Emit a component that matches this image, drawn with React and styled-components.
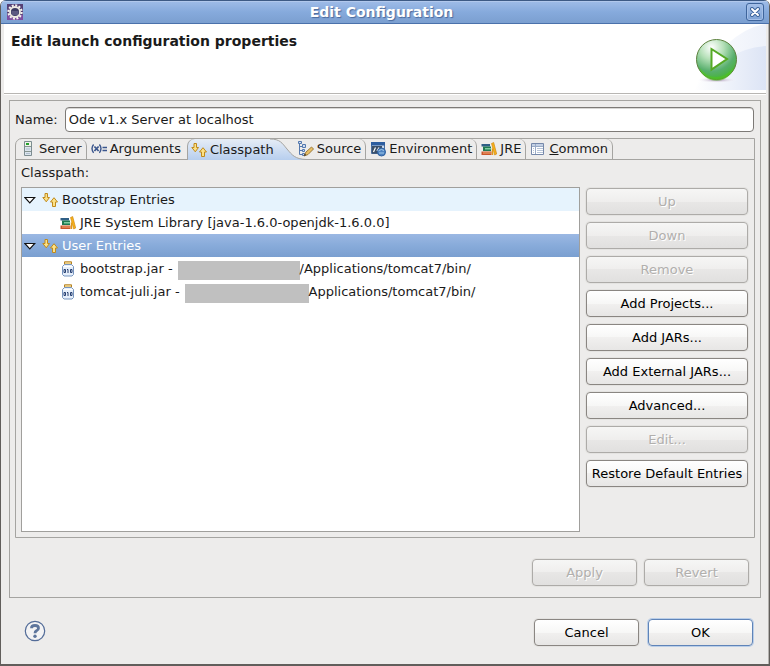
import React from "react";
import styled, { createGlobalStyle, css } from "styled-components";

const GlobalStyle = createGlobalStyle`
  * { box-sizing: border-box; }
  body { margin: 0; background: #fff; }
  body, button, input {
    font-family: "DejaVu Sans", sans-serif;
    font-size: 13px;
    line-height: 16px;
    color: #1a1a1a;
  }
`;

const Window = styled.main`
  display: flex;
  flex-direction: column;
  min-height: 100vh;
  background: #edeceb;
  border: 1px solid #615e5b;
  border-top: 0;
  border-bottom-width: 2px;
  border-radius: 6px 6px 0 0;
  box-shadow: inset -1px 0 #b5b2af;
  padding-right: 1px;
  overflow: hidden;
`;

const TitleBar = styled.header`
  display: flex;
  align-items: center;
  height: 24px;
  margin-right: -1px;
  padding: 0 5px 0 6px;
  background: linear-gradient(#9fbce8, #86aadc 50%, #7b9fd0);
  border-top: 1px solid #3d5a85;
  border-bottom: 1px solid #4a71ab;
  box-shadow: inset 0 1px #b1c8ec;
`;

const WindowTitle = styled.h1`
  flex: 1;
  margin: 0;
  padding-right: 6px;
  font-size: 14px;
  line-height: 16px;
  text-align: center;
  color: #fff;
  text-shadow: 1px 1px 1px #4a6a9c;
`;

const CloseButton = styled.button`
  display: grid;
  place-items: center;
  width: 18px;
  height: 18px;
  padding: 0;
  background: linear-gradient(#a3bfe9, #7fa3d5);
  border: 1px solid #3f659c;
  border-radius: 3px;
  box-shadow: inset 0 0 0 1px #a5c0e8;
`;

const Banner = styled.section`
  display: flex;
  justify-content: space-between;
  align-items: flex-start;
  height: 71px;
  margin: 0 2px 0 3px;
  background: #fff;
  border-bottom: 1px solid #fff;
  box-shadow: inset 0 -1px #b8b6b3;
`;

const BannerTitle = styled.h2`
  margin: 0;
  padding: 9px 7px;
  font-size: 14px;
  line-height: 16px;
`;

const Content = styled.section`
  display: flex;
  flex: 1;
  flex-direction: column;
  margin: 5px 7px 0 8px;
  padding: 6px 5px 11px;
  border: 1px solid #a5a4a1;
`;

const NameRow = styled.div`
  display: flex;
  align-items: center;
  gap: 7px;
  padding-right: 1px;
`;

const NameInput = styled.input`
  flex: 1;
  min-width: 0;
  height: 25px;
  padding: 0 3px;
  background: #fff;
  border: 1px solid #7d7a77;
  border-radius: 4px;
  box-shadow: inset 0 1px #d8d7d5;
  outline: none;
`;

const TabFolder = styled.div`
  display: flex;
  flex: 1;
  flex-direction: column;
  margin-top: 6px;
  border: 1px solid #a5a4a1;
  border-radius: 7px 0 0 0;
`;

const TabList = styled.div`
  display: flex;
  height: 21px;
  border-bottom: 1px solid #a5a4a1;
`;

const TabButton = styled.button`
  position: relative;
  display: flex;
  align-items: center;
  gap: 3px;
  height: 20px;
  padding: 0 4px;
  background: none;
  border: 0;
  border-right: 1px solid #a5a4a1;
  border-radius: 0 7px 0 0;
  white-space: nowrap;
  ${(p) => p.$beforeActive && css`
    border-right: 0;
    padding-right: 6px;
  `}
  ${(p) => p.$active && css`
    z-index: 1;
    height: 21px;
    padding-right: 20px;
    border-right: 0;
    border-radius: 7px 0 0 0;
    background: linear-gradient(#e6edf6, #b7ceee) no-repeat 0 0 / calc(100% - 24px) 100%;
    box-shadow: inset 1px 0 #a5a4a1;
  `}
`;

const TabCurve = styled.svg`
  position: absolute;
  right: -12px;
  top: 0;
`;

const TabLabel = styled.span`
  position: relative;
`;

const TabPanel = styled.div`
  display: flex;
  flex: 1;
  flex-direction: column;
  padding: 5px;
`;

const PanelLabel = styled.div`
  height: 22px;
`;

const Columns = styled.div`
  display: flex;
  flex: 1;
  gap: 6px;
`;

const Tree = styled.ul`
  flex: 1;
  min-width: 0;
  margin: 0;
  padding: 0;
  list-style: none;
  background: #fff;
  border: 1px solid #a09f9c;
`;

const TreeRow = styled.li`
  display: flex;
  align-items: center;
  gap: 4px;
  height: 23px;
  padding-left: ${(p) => (p.$level === 2 ? 38 : 2)}px;
  white-space: nowrap;
  ${(p) => p.$tint && css`background: #e6f3fd;`}
  ${(p) => p.$selected && css`
    background: linear-gradient(#9bb8e3, #88abda 50%, #7a9fd0);
    color: #fff;
  `}
`;

const Twisty = styled.svg`
  margin-right: 2px;
`;

const Redacted = styled.span`
  display: inline-block;
  width: ${(p) => p.$width}px;
  height: 19px;
  margin-top: 4px;
  background: #c0c0c0;
`;

const Path = styled.span`
  display: flex;
  align-items: center;
  padding-left: 1px;
`;

const Actions = styled.div`
  display: flex;
  flex-direction: column;
  gap: 7px;
  padding: 1px 1px 0 0;
`;

const PushButton = styled.button`
  min-width: ${(p) => (p.$wide ? 162 : 105)}px;
  height: 27px;
  padding: 0 4px;
  background: linear-gradient(#ffffff, #f7f7f6 50%, #f1f0ef 50%, #e7e6e5);
  border: 1px solid #8a8682;
  border-radius: 4px;
  box-shadow: 0 0 0 1px #e4e3e1;
  color: #000;
  white-space: nowrap;
  &:disabled {
    background: linear-gradient(#f6f6f5, #efeeed 50%, #e8e7e6 50%, #e1e0df);
    border-color: #adaba8;
    color: #b1afad;
    text-shadow: 1px 1px #fff;
  }
  ${(p) => p.$primary && css`
    border-color: #5f84b8;
    box-shadow: 0 0 0 1px #bacee8;
  `}
`;

const ButtonRow = styled.div`
  display: flex;
  justify-content: flex-end;
  gap: 7px;
  margin-top: 21px;
  padding-right: 6px;
`;

const Footer = styled.footer`
  display: flex;
  align-items: flex-start;
  gap: 9px;
  padding: 21px 15px 18px 23px;
`;

const HelpButton = styled.button`
  display: flex;
  margin-right: auto;
  padding: 1px 0 0;
  background: none;
  border: 0;
`;

function Icon({ children }) {
  return (
    <svg width="16" height="16" viewBox="0 0 16 16" aria-hidden="true">
      {children}
    </svg>
  );
}

function AppIcon() {
  return (
    <Icon>
      <rect width="16" height="16" fill="#554075" />
      <path d="M0 11h16v5H0z" fill="#7e4fa0" />
      <circle cx="8" cy="8" r="6.600" fill="none" stroke="#f5f3ee" strokeWidth="2.200" strokeDasharray="2 1.456" />
      <circle cx="8" cy="8" r="5" fill="#3d3b63" stroke="#efece4" strokeWidth="1.800" />
      <path d="M4.500 8h7M5 10h6" stroke="#7c789f" strokeWidth="1" />
    </Icon>
  );
}

function ServerIcon() {
  return (
    <Icon>
      <path d="M4.500.500h7v14h-7z" fill="#dce5ee" stroke="#7d8d91" />
      <path d="M5 1h6v4.500H5z" fill="#eef4e9" />
      <path d="M6 2h3v2H6z" fill="#24a12d" />
      <path d="M5 5.500h6M5 10.500h6" stroke="#87958f" />
      <path d="M6 8h4M6 12.500h4" stroke="#b1bfce" />
    </Icon>
  );
}

function ArgumentsIcon() {
  return (
    <Icon>
      <g fill="none" stroke="#3b568d" strokeWidth="1.400">
        <path d="M2.600 3.500Q-.600 7.500 2.600 11.800M8.400 3.500Q11.600 7.500 8.400 11.800" />
        <path d="M3.400 5.500L7.600 10M7.600 5.500L3.400 10" strokeWidth="1.800" />
        <path d="M11.500 6.500H16M11.500 9.500H16" />
      </g>
    </Icon>
  );
}

function ClasspathIcon() {
  return (
    <Icon>
      <g fill="#fbe187" stroke="#c08a1c" strokeLinejoin="round">
        <path d="M3 1.500h2.500v4h2L4.250 9.800.800 5.500H3z" />
        <path d="M10.500 14.500h3v-4.500h2L12 5.700 8.500 10h2z" />
      </g>
    </Icon>
  );
}

function SourceIcon() {
  return (
    <Icon>
      <g fill="none" stroke="#5478ae">
        <path d="M1.500 2v11.500H4M1.500 5.500H4M1.500 9.500H4" />
        <path d="M.500.500h3v2h-3zM4.500 3.500h3v3h-3zM4.500 8.500h2v2h-2zM4.500 12.500h2v2h-2z" fill="#cfdef3" />
      </g>
      <path d="M6 15l2-4 5.500-5 2 2-5.500 5.500z" fill="#e9bf63" stroke="#9a7a3d" />
      <path d="M6 15l.8-2.200 1.500 1.300z" fill="#3b3530" />
    </Icon>
  );
}

function EnvironmentIcon() {
  return (
    <Icon>
      <path d="M1.500 1.500h13v11h-13z" fill="#c9d9ee" stroke="#4b6f9f" />
      <path d="M1 1h14v3.500H1z" fill="#2c5d9f" />
      <path d="M2 5h10v7.500H2z" fill="#3a4f68" />
      <path d="M3.500 11l2-4.500M7 10l2-3.500" stroke="#fff" strokeWidth="1.200" />
      <circle cx="11.500" cy="11" r="4" fill="#4d82c1" stroke="#2f609f" />
      <path d="M8.500 9.800Q11.500 7.300 14 9.500M9 12h5" fill="none" stroke="#a1cbea" />
    </Icon>
  );
}

function LibraryIcon() {
  return (
    <Icon>
      <path d="M.500 3h8.500v2.500H.500z" fill="#2f5f86" />
      <path d="M2 5.500h8v4.500H2z" fill="#1f7a52" />
      <path d="M4 7h6v1.500H4z" fill="#7fcda0" />
      <path d="M.500 10.500h10v3.500H.500z" fill="#c9562b" />
      <path d="M2 12h8.500" stroke="#f1aa78" />
      <path d="M10.500 2.500l2.200-1L15.700 13l-2 1z" fill="#f7b21c" stroke="#c98008" strokeWidth=".6" />
      <path d="M10.800 7l1.400 1v6h-1.400z" fill="#e09a17" />
    </Icon>
  );
}

function CommonIcon() {
  return (
    <Icon>
      <path d="M1.500 2.500h12v11h-12z" fill="#fff" stroke="#7588aa" />
      <path d="M2 3h11v2H2z" fill="#c3d0e4" />
      <path d="M2 5.500h11M5.500 3v10" stroke="#9aabc6" />
      <path d="M3 7.500h1M3 9.500h1M3 11.500h1M7 7.500h6M7 9.500h6M7 11.500h6" stroke="#b6c4d8" />
    </Icon>
  );
}

function JarIcon() {
  return (
    <Icon>
      <path d="M4.500.800h7v2.500h-7z" fill="#f7df9d" stroke="#b58122" />
      <path d="M4.500 3.500h7l2 2v8l-1.500 1.500H4l-1.500-1.500v-8z" fill="#e6effb" stroke="#7795bf" />
      <path d="M3.300 5.500h9.400" stroke="#fff" />
      <g fill="none" stroke="#263f70">
        <path d="M4 8.500h1.500v3H4zM10.500 8.500H12v3h-1.500zM7 8.500h1v3.500" />
      </g>
    </Icon>
  );
}

function RunArtwork() {
  return (
    <svg width="80" height="66" viewBox="0 0 80 66" aria-hidden="true">
      <defs>
        <linearGradient id="sky">
          <stop offset="0" stopColor="#fff" />
          <stop offset="1" stopColor="#dce4f5" />
        </linearGradient>
        <linearGradient id="skyLight">
          <stop offset="0" stopColor="#fff" />
          <stop offset="1" stopColor="#edf1fa" />
        </linearGradient>
        <radialGradient id="ball" cx=".38" cy=".2" r=".85">
          <stop offset="0" stopColor="#fff" />
          <stop offset=".35" stopColor="#b5e0b8" />
          <stop offset=".7" stopColor="#58af6d" />
          <stop offset="1" stopColor="#43b52e" />
        </radialGradient>
        <radialGradient id="ballShadow">
          <stop offset="0" stopColor="#9f86ad" />
          <stop offset="1" stopColor="#fff" stopOpacity="0" />
        </radialGradient>
      </defs>
      <path d="M8 66Q40 6 80 0V66z" fill="url(#skyLight)" />
      <path d="M8 66Q40 24 80 22V66z" fill="url(#sky)" />
      <ellipse cx="31" cy="56" rx="20" ry="3" fill="url(#ballShadow)" />
      <circle cx="30.500" cy="35.500" r="20" fill="url(#ball)" stroke="#5d813e" />
      <path d="M13 43a18 18 0 0 0 35 0Q40 53 30 53T13 43z" fill="#50ca16" opacity=".5" />
      <path d="M25.500 25v20.500L41 35z" fill="#fff" stroke="#55a924" strokeWidth="2" />
    </svg>
  );
}

function SelectedTabEdge() {
  return (
    <TabCurve width="36" height="21" viewBox="0 0 36 21" aria-hidden="true">
      <defs>
        <linearGradient id="tabFill" gradientUnits="userSpaceOnUse" x1="0" y1="0" x2="0" y2="21">
          <stop offset="0" stopColor="#e6edf6" />
          <stop offset="1" stopColor="#b7ceee" />
        </linearGradient>
      </defs>
      <path d="M0 0C10 0 12 4 17 10S25 20 36 20.500V21H0z" fill="url(#tabFill)" />
      <path d="M0 0C10 0 12 4 17 10S25 20 36 20.500" fill="none" stroke="#a5a4a1" />
    </TabCurve>
  );
}

const tabs = [
  { label: "Server", icon: <ServerIcon /> },
  { label: "Arguments", icon: <ArgumentsIcon />, beforeActive: true },
  { label: "Classpath", icon: <ClasspathIcon />, active: true },
  { label: "Source", icon: <SourceIcon /> },
  { label: "Environment", icon: <EnvironmentIcon /> },
  { label: "JRE", icon: <LibraryIcon /> },
  { label: <><u>C</u>ommon</>, icon: <CommonIcon /> },
];

const actions = [
  ["Up", true],
  ["Down", true],
  ["Remove", true],
  ["Add Projects...", false],
  ["Add JARs...", false],
  ["Add External JARs...", false],
  ["Advanced...", false],
  ["Edit...", true],
  ["Restore Default Entries", false],
];

function GroupRow({ label, ...rest }) {
  return (
    <TreeRow role="treeitem" aria-level={1} aria-expanded="true" {...rest}>
      <Twisty width="12" height="8" viewBox="0 0 12 8" aria-hidden="true">
        <path d="M.800 1.500h10L5.800 6.800z" fill="#fff" stroke="#111" strokeWidth="1.200" />
      </Twisty>
      <ClasspathIcon />
      <span>{label}</span>
    </TreeRow>
  );
}

function EntryRow({ icon, children }) {
  return (
    <TreeRow role="treeitem" aria-level={2} $level={2}>
      {icon}
      {children}
    </TreeRow>
  );
}

export default function App() {
  return (
    <>
      <GlobalStyle />
      <Window>
        <TitleBar>
          <AppIcon />
          <WindowTitle>Edit Configuration</WindowTitle>
          <CloseButton type="button" aria-label="Close">
            <svg width="10" height="10" viewBox="0 0 10 10" aria-hidden="true">
              <path d="M2 2l6 6M8 2L2 8" stroke="#3f659c" strokeWidth="4" strokeLinecap="round" />
              <path d="M2 2l6 6M8 2L2 8" stroke="#fff" strokeWidth="2" strokeLinecap="round" />
            </svg>
          </CloseButton>
        </TitleBar>
        <Banner>
          <BannerTitle>Edit launch configuration properties</BannerTitle>
          <RunArtwork />
        </Banner>
        <Content>
          <NameRow>
            <label htmlFor="name">Name:</label>
            <NameInput id="name" type="text" defaultValue="Ode v1.x Server at localhost" />
          </NameRow>
          <TabFolder>
            <TabList role="tablist">
              {tabs.map((tab, i) => (
                <TabButton
                  key={i}
                  type="button"
                  role="tab"
                  aria-selected={!!tab.active}
                  $active={tab.active}
                  $beforeActive={tab.beforeActive}
                >
                  {tab.active && <SelectedTabEdge />}
                  {tab.icon}
                  <TabLabel>{tab.label}</TabLabel>
                </TabButton>
              ))}
            </TabList>
            <TabPanel role="tabpanel">
              <PanelLabel id="classpath-label">Classpath:</PanelLabel>
              <Columns>
                <Tree role="tree" aria-labelledby="classpath-label">
                  <GroupRow label="Bootstrap Entries" $tint />
                  <EntryRow icon={<LibraryIcon />}>
                    <span>JRE System Library [java-1.6.0-openjdk-1.6.0.0]</span>
                  </EntryRow>
                  <GroupRow label="User Entries" aria-selected="true" $selected />
                  <EntryRow icon={<JarIcon />}>
                    <span>bootstrap.jar -</span>
                    <Path><Redacted $width={122} />/Applications/tomcat7/bin/</Path>
                  </EntryRow>
                  <EntryRow icon={<JarIcon />}>
                    <span>tomcat-juli.jar -</span>
                    <Path><Redacted $width={124} />Applications/tomcat7/bin/</Path>
                  </EntryRow>
                </Tree>
                <Actions>
                  {actions.map(([label, disabled]) => (
                    <PushButton key={label} type="button" disabled={disabled} $wide>
                      {label}
                    </PushButton>
                  ))}
                </Actions>
              </Columns>
            </TabPanel>
          </TabFolder>
          <ButtonRow>
            <PushButton type="button" disabled>Apply</PushButton>
            <PushButton type="button" disabled>Revert</PushButton>
          </ButtonRow>
        </Content>
        <Footer>
          <HelpButton type="button" aria-label="Help">
            <svg width="22" height="22" viewBox="0 0 22 22" aria-hidden="true">
              <circle cx="11" cy="11" r="9.700" fill="#f3f3f4" stroke="#536c98" strokeWidth="1.200" />
              <path d="M7.500 8.200Q7.500 5.500 11 5.500T14.500 8.200Q14.500 9.700 12.500 10.700Q11 11.600 11 13.200" fill="none" stroke="#5d759c" strokeWidth="2.800" />
              <circle cx="11" cy="16.300" r="1.700" fill="#5d759c" />
            </svg>
          </HelpButton>
          <PushButton type="button">Cancel</PushButton>
          <PushButton type="button" $primary>OK</PushButton>
        </Footer>
      </Window>
    </>
  );
}
